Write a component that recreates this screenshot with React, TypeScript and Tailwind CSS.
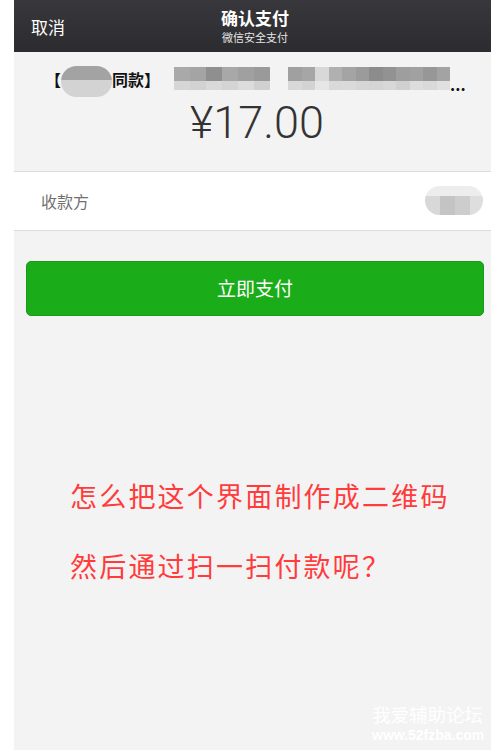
import React from "react";

const cjk = { fontFamily: '"Noto Sans CJK SC", "Noto Sans", sans-serif' };

const topA = ["#a9a9a9", "#a4a4a4", "#8f8f8f", "#a8a8a8", "#a0a0a0", "#9a9a9a"];
const botA = ["#d6d6d6", "#d2d2d2", "#d9d9d9", "#d4d4d4", "#dcdcdc", "#d0d0d0"];
const topB = ["#a0a0a0", "#a6a6a6", "#d8d8d8", "#b0b0b0", "#a4a4a4", "#9b9b9b", "#8c8c8c", "#929292", "#9e9e9e", "#a1a1a1", "#979797", "#a3a3a3"];
const botB = ["#d8d8d8", "#d3d3d3", "#e6e6e6", "#d9d9d9", "#dadada", "#d6d6d6", "#d4d4d4", "#d8d8d8", "#d0d0d0", "#dddddd", "#d9d9d9", "#e0e0e0"];

function Pix({ top, bot, cell }: { top: string[]; bot: string[]; cell: number }) {
  return (
    <div className="flex flex-col">
      <div className="flex h-[14px]">
        {top.map((c, i) => (
          <div key={i} style={{ background: c, width: cell }} />
        ))}
      </div>
      <div className="flex h-[9px]">
        {bot.map((c, i) => (
          <div key={i} style={{ background: c, width: cell }} />
        ))}
      </div>
    </div>
  );
}

export default function App() {
  return (
    <div className="w-[491px] h-[750px] overflow-hidden bg-white flex" style={cjk}>
      <div className="w-[14px] shrink-0 bg-white" />
      <div className="relative w-[482px] shrink-0 h-[750px] bg-[#f3f3f3] flex flex-col">
        {/* header */}
        <div className="h-[52px] bg-gradient-to-b from-[#38383c] to-[#2c2c30] flex items-center relative">
          <div className="pl-[17px] text-white text-[17px] leading-none pt-[1px]">取消</div>
          <div className="absolute left-0 right-0 top-[7px] flex flex-col items-center text-white">
            <div className="text-[17px] font-bold leading-[22px]">确认支付</div>
            <div className="text-[11px] leading-[14px] mt-[1px] text-[#e6e6e6]">微信安全支付</div>
          </div>
        </div>

        {/* product line */}
        <div className="h-[46px] flex items-center pl-[31px] pt-[7px]">
          <div className="flex items-center text-[16px] font-bold text-[#111] leading-none">
            <span>【</span>
            <div className="w-[51px] h-[31px] mt-[6px] rounded-full overflow-hidden flex flex-col">
              <div className="h-[14px] bg-[#a3a3a3]" />
              <div className="flex-1 bg-[#d3d3d3]" />
            </div>
            <span>同款】</span>
          </div>
          <div className="ml-[14px]">
            <Pix top={topA} bot={botA} cell={16} />
          </div>
          <div className="ml-[18px]">
            <Pix top={topB} bot={botB} cell={13.5} />
          </div>
          <div className="text-[#111] text-[16px] leading-none mt-[10px] font-bold">...</div>
        </div>

        {/* price */}
        <div
          className="h-[55px] flex items-start justify-center text-[45px] leading-none text-[#333] pl-[4px] font-light"
          style={{ fontFamily: 'Roboto, "Noto Sans", sans-serif' }}
        >
          <span className="mt-[2px]">¥17.00</span>
        </div>

        {/* receiver */}
        <div className="mt-[18px] border-t border-b border-[#dcdcdc] bg-white h-[60px] flex items-center justify-between pl-[27px] pr-[13px]">
          <span className="text-[16px] text-[#707070]">收款方</span>
          <div className="w-[58px] h-[29px] rounded-full overflow-hidden flex flex-col mt-[-2px]">
            <div className="h-[10px] bg-[#ededed]" />
            <div className="flex-1 flex">
              <div className="w-[15px] bg-[#d8d8d8]" />
              <div className="w-[15px] bg-[#c4c4c4]" />
              <div className="w-[15px] bg-[#cdcdcd]" />
              <div className="flex-1 bg-[#dedede]" />
            </div>
          </div>
        </div>

        {/* button */}
        <div className="px-[12px] mt-[30px]">
          <div className="h-[55px] rounded-[5px] bg-[#1aad19] border border-[#179b16] flex items-center justify-center text-white text-[19px]">
            立即支付
          </div>
        </div>

        {/* red question */}
        <div className="pl-[56px] mt-[145px] text-[#ff3b3b] text-[27px] tracking-[2.2px] leading-[70px]">
          <div>怎么把这个界面制作成二维码</div>
          <div>然后通过扫一扫付款呢？</div>
        </div>

        {/* watermark */}
        <div className="absolute left-[358px] top-[702px] flex flex-col text-white">
          <div className="text-[18.5px] leading-[24px]">我爱辅助论坛</div>
          <div
            className="text-[14px] font-bold leading-[18px]"
            style={{ fontFamily: '"Liberation Sans", Arial, sans-serif' }}
          >
            www.52fzba.com
          </div>
        </div>
      </div>
    </div>
  );
}
